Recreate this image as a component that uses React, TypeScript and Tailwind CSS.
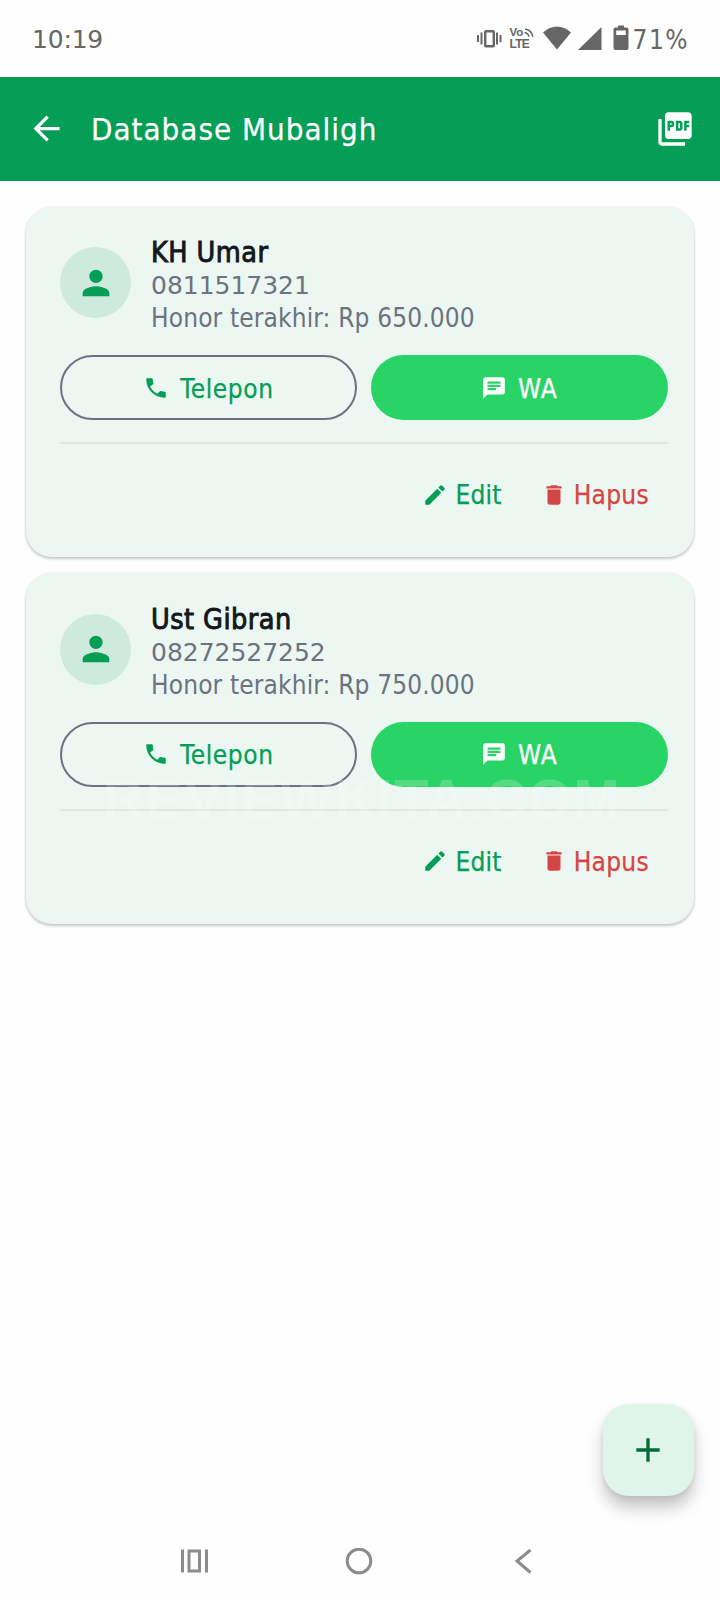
import React from "react";
import { MdAdd, MdArrowBack, MdChat, MdDelete, MdEdit, MdPerson, MdPictureAsPdf } from "react-icons/md";

type Contact = { name: string; phone: string; fee: string };

const contacts: Contact[] = [
  { name: "KH Umar", phone: "0811517321", fee: "650.000" },
  { name: "Ust Gibran", phone: "08272527252", fee: "750.000" },
];

function StatusBar() {
  return (
    <div className="flex h-[77px] items-start justify-between pl-[32px] pr-[31px] text-[#666]">
      <span className="mt-[23px] font-['DejaVu_Sans'] text-[25px] leading-[34px] tracking-[-0.2px]">10:19</span>
      <div className="mt-[24px] flex items-start">
        <svg width="25" height="28" viewBox="0 0 25 28" fill="currentColor">
          <path d="M0 11h2v7H0zM3.500 8.500h2v12h-2zM22.500 11h2v7h-2zM19 8.500h2v12h-2z" />
          <rect x="8.200" y="7.200" width="8.600" height="15" rx="0.800" fill="none" stroke="currentColor" strokeWidth="2.400" />
        </svg>
        <div className="relative ml-[8px] h-[28px] w-[25px] font-['Liberation_Sans'] font-bold">
          <div className="mt-[3px] text-[11.5px] leading-[11px]">Vo</div>
          <div className="text-[12px] leading-[12px] tracking-[-0.7px]">LTE</div>
          <svg className="absolute left-[14px] top-[4px]" width="10" height="10" viewBox="0 0 10 10" fill="none" stroke="currentColor" strokeWidth="1.600">
            <path d="M1 1.200c4 0 7.500 3.200 7.800 7.600M.500 4.800c2.400.1 4 1.600 4.400 3.900" />
          </svg>
        </div>
        <svg className="ml-[8px]" width="28" height="28" viewBox="0 0 28 28" fill="currentColor">
          <path d="M0 8.500C8 .500 20 .500 28 8.500L14 25.500z" />
        </svg>
        <svg className="ml-[7px]" width="24" height="28" viewBox="0 0 24 28" fill="currentColor">
          <path d="M0 26L23.500 3v23z" />
        </svg>
        <svg className="ml-[11px]" width="16" height="28" viewBox="0 0 16 28" fill="currentColor">
          <path fillRule="evenodd" d="M5 1.500h6v2h2.500a2 2 0 0 1 2 2V24a2 2 0 0 1-2 2h-11a2 2 0 0 1-2-2V5.500a2 2 0 0 1 2-2H5zM3.200 6.500v4.500h9.600V6.500z" />
        </svg>
        <span className="ml-[4px] mt-[-1px] font-['DejaVu_Sans_Condensed','DejaVu_Sans'] text-[26px] leading-[34px] tracking-[1.5px]">71%</span>
      </div>
    </div>
  );
}

function PhoneIcon() {
  return (
    <svg className="mr-[11px] size-[26px]" viewBox="0 0 24 24" fill="currentColor">
      <path d="M6.540 10.600c1.440 2.830 3.900 5.300 6.730 6.740l2.250-2.250c.3-.3.700-.400 1.060-.260 1.120.370 2.180.570 3.420.570.550 0 1 .450 1 1V20c0 .550-.450 1-1 1C10.610 21 3 13.390 3 4c0-.550.450-1 1-1h4c.550 0 1 .450 1 1 0 1.250.200 2.300.570 3.420.110.350.030.740-.250 1.020z" />
    </svg>
  );
}

function ContactCard({ name, phone, fee }: Contact) {
  return (
    <article className="h-[350.5px] rounded-[26px] bg-[#ecf7f1] pl-[34px] pr-[26px] pt-[28.5px] shadow-[0_2px_3px_rgba(0,0,0,0.2),0_0_3px_rgba(0,0,0,0.08)]">
      <div className="flex items-start">
        <div className="mt-[12px] flex size-[71px] items-center justify-center rounded-full bg-[#cdeadd]">
          <MdPerson className="size-[40px] text-[#049e56]" />
        </div>
        <div className="ml-[20px] whitespace-nowrap text-[#6b7280]">
          <h2 className="h-[34px] pt-px text-[28.5px] leading-[34px] tracking-[0.45px] text-[#14181a] [-webkit-text-stroke:0.9px_#14181a]">{name}</h2>
          <p className="h-[33px] font-['DejaVu_Sans'] text-[25px] leading-[33px] tracking-[-0.02px]">{phone}</p>
          <p className="h-[32px] text-[26px] leading-[32px] tracking-[0.14px]">Honor terakhir: Rp {fee}</p>
        </div>
      </div>
      <div className="mt-[21px] grid grid-cols-2 gap-[14px]">
        <button className="flex h-[65px] items-center justify-center rounded-full border-2 border-[#6b7280] text-[#049e56]">
          <PhoneIcon />
          <span className="mt-[3px] text-[26px] tracking-[0.6px] [-webkit-text-stroke:0.25px_#049e56]">Telepon</span>
        </button>
        <button className="flex h-[65px] items-center justify-center rounded-full bg-[#28d466] text-white">
          <MdChat className="mr-[11px] size-[26px]" />
          <span className="mt-[3px] text-[26px] tracking-[1.2px] [-webkit-text-stroke:0.25px_white]">WA</span>
        </button>
      </div>
      <div className="mt-[22px] h-[2px] bg-[#dde8e3]" />
      <div className="mt-[32.5px] flex h-[36px] items-center justify-end pr-[19px] text-[26px]">
        <button className="flex items-center text-[#049e56]">
          <MdEdit className="mr-[7.5px] size-[26px]" />
          <span className="mt-[2px] tracking-[0.2px] [-webkit-text-stroke:0.25px_#049e56]">Edit</span>
        </button>
        <button className="ml-[39px] flex items-center text-[#d64545]">
          <MdDelete className="mr-[7px] size-[26px]" />
          <span className="mt-[2px] tracking-[0.3px] [-webkit-text-stroke:0.25px_#d64545]">Hapus</span>
        </button>
      </div>
    </article>
  );
}

export default function App() {
  return (
    <div className="relative flex h-[1600px] w-[720px] flex-col overflow-hidden bg-[#fefefe] font-['DejaVu_Sans_Condensed','DejaVu_Sans',sans-serif]">
      <StatusBar />
      <header className="flex h-[103.5px] items-center bg-[#049e56] pl-[27px] pr-[25px] text-white">
        <MdArrowBack className="size-[39px]" />
        <h1 className="ml-[25px] mt-[1px] flex-1 whitespace-nowrap text-[31px] tracking-[1px] [-webkit-text-stroke:0.25px_white]">Database Mubaligh</h1>
        <MdPictureAsPdf className="size-[40px]" />
      </header>
      <main className="flex flex-1 flex-col gap-[16px] px-[26px] pt-[26px]">
        {contacts.map((c) => (
          <ContactCard key={c.phone} {...c} />
        ))}
      </main>
      <nav className="flex h-[80px] items-start justify-center pr-[7px] pt-[28px] text-[#8c8c8c]">
        <svg width="27" height="26" viewBox="0 0 27 26" fill="none" stroke="currentColor" strokeWidth="3">
          <path d="M1.500 1.500v23M25.500 1.500v23M8 3h10.500v20H8z" />
        </svg>
        <svg className="ml-[137px]" width="28" height="28" viewBox="0 0 28 28" fill="none" stroke="currentColor" strokeWidth="3">
          <circle cx="14" cy="13" r="11.800" />
        </svg>
        <svg className="ml-[141px]" width="18" height="27" viewBox="0 0 18 27" fill="none" stroke="currentColor" strokeWidth="3">
          <path d="M16.500 2L3 13l13.500 11.500" />
        </svg>
      </nav>
      <button className="absolute left-[602.5px] top-[1404px] flex size-[91.5px] items-center justify-center rounded-[26px] bg-[#e0f5ea] text-[#046b3a] shadow-[0_12px_16px_rgba(0,0,0,0.22),0_2px_5px_rgba(0,0,0,0.08)]">
        <MdAdd className="mr-px size-[40px]" />
      </button>
      <div className="pointer-events-none absolute left-[103px] top-[769px] whitespace-nowrap font-['Liberation_Sans'] text-[56px] font-bold leading-[60px] tracking-[1.8px] text-white/20">REVIEWKITA.COM</div>
    </div>
  );
}
